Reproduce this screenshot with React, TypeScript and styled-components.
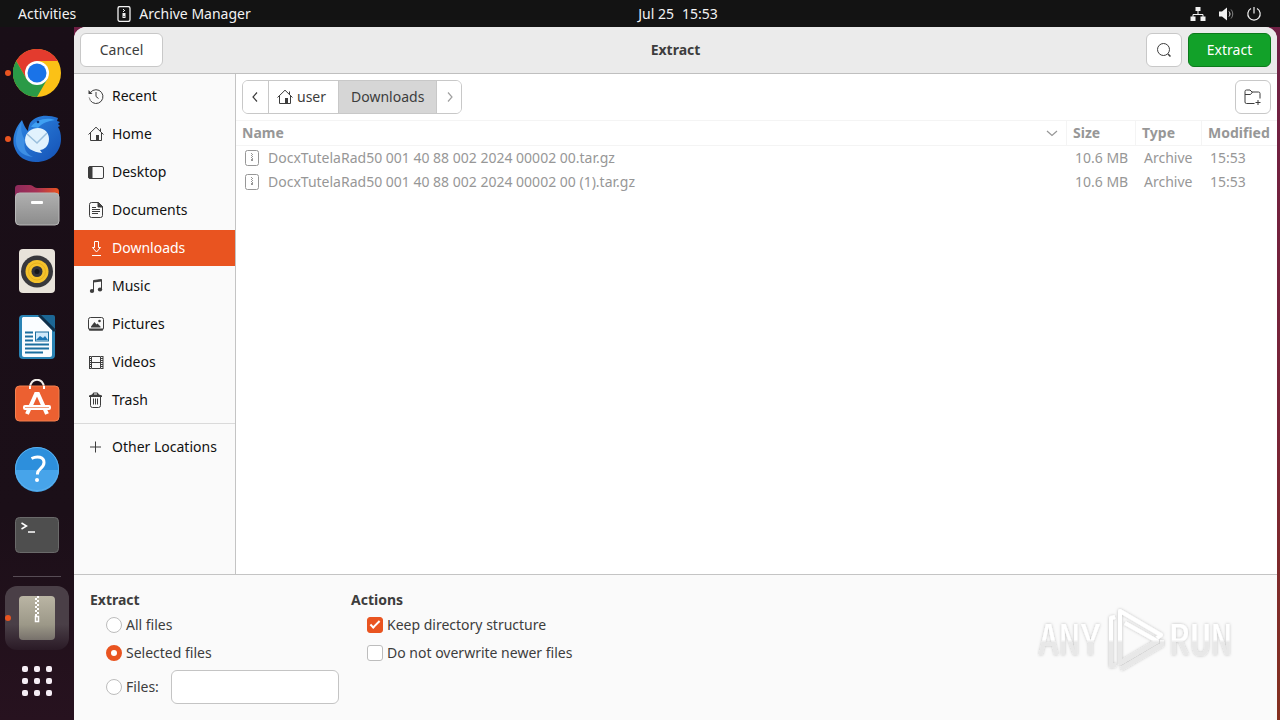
import React, { useState } from "react";
import styled, { createGlobalStyle, css } from "styled-components";

const GlobalStyle = createGlobalStyle`
  *, *::before, *::after { box-sizing: border-box; }
  body {
    margin: 0;
    background: #1a0f18;
    font-family: "Noto Sans", "Open Sans", sans-serif;
    font-size: 14px;
    line-height: 20px;
    color: #3d3d3d;
  }
  button, input { font: inherit; color: inherit; }
`;

const Desktop = styled.div`
  display: flex;
  flex-direction: column;
  min-height: 100vh;
  background: linear-gradient(#6e1f45, #7a2436 60%, #84301f);
`;

const TopBar = styled.header`
  display: flex;
  align-items: center;
  height: 27px;
  padding: 0 18px;
  background: #131313;
  color: #f2f2f2;
`;

const BarSide = styled.div<{ $end?: boolean }>`
  display: flex;
  flex: 1;
  align-items: center;
  gap: ${(p) => (p.$end ? 12 : 40)}px;
  justify-content: ${(p) => (p.$end ? "flex-end" : "flex-start")};
`;

const BarButton = styled.button`
  display: flex;
  align-items: center;
  gap: 7px;
  padding: 0;
  border: 0;
  background: none;
`;

const Clock = styled.time`
  display: flex;
  gap: 8px;
  padding-left: 76px;
`;

const Workspace = styled.div`
  display: flex;
  flex: 1;
  padding-right: 3px;
`;

const Dock = styled.nav`
  display: flex;
  flex-direction: column;
  align-items: center;
  width: 74px;
  padding-top: 13px;
  background: linear-gradient(#190e17, #1b0f18 70%, #27121f);
`;

const DockItem = styled.button<{ $running?: boolean; $active?: boolean; $height?: number }>`
  position: relative;
  display: flex;
  align-items: center;
  justify-content: center;
  width: 64px;
  height: ${(p) => p.$height ?? 66}px;
  padding: 0;
  border: 0;
  border-radius: 12px;
  background: ${(p) => (p.$active ? "linear-gradient(#4a3f47 60%, #2a1a26)" : "none")};
  ${(p) =>
    p.$running &&
    css`
      &::before {
        content: "";
        position: absolute;
        left: 0;
        width: 6px;
        height: 6px;
        border-radius: 50%;
        background: #e95420;
      }
    `}
`;

const DockRule = styled.hr`
  width: 48px;
  height: 1px;
  margin: 8px 0 9px;
  border: 0;
  background: #574c55;
`;

const Dialog = styled.main`
  display: flex;
  flex: 1;
  flex-direction: column;
  min-width: 0;
  border-radius: 12px 12px 0 0;
  background: #fafafa;
  overflow: hidden;
`;

const HeaderBar = styled.div`
  display: grid;
  grid-template-columns: 1fr auto 1fr;
  align-items: center;
  height: 47px;
  padding: 0 6px;
  border-bottom: 1px solid #bfbfbf;
  background: #ebebeb;
`;

const Title = styled.h1`
  margin: 0;
  font-size: 14px;
  line-height: 20px;
`;

const HeaderEnd = styled.div`
  display: flex;
  justify-content: flex-end;
  gap: 6px;
`;

const Button = styled.button<{ $kind?: "suggested" | "icon" }>`
  display: flex;
  align-items: center;
  justify-content: center;
  justify-self: start;
  width: ${(p) => (p.$kind === "icon" ? 36 : 83)}px;
  height: 34px;
  padding: 0;
  border: 1px solid #c8c8c8;
  border-radius: 6px;
  background: #fff;
  ${(p) =>
    p.$kind === "suggested" &&
    css`
      border-color: #0b7a1b;
      background: #12a129;
      color: #fff;
    `}
`;

const Body = styled.div`
  display: flex;
  flex: 1;
  min-height: 500px;
`;

const Sidebar = styled.nav`
  display: flex;
  flex-direction: column;
  gap: 2px;
  width: 162px;
  padding-top: 4px;
  border-right: 1px solid #c4c4c4;
  background: #fafafa;
`;

const Place = styled.a<{ $selected?: boolean }>`
  display: flex;
  align-items: center;
  gap: 8px;
  height: 36px;
  padding-left: 14px;
  color: ${(p) => (p.$selected ? "#fff" : "#111")};
  background: ${(p) => (p.$selected ? "#e95420" : "transparent")};
  text-decoration: none;
  white-space: nowrap;
  svg { color: ${(p) => (p.$selected ? "#fff" : "#3d3d3d")}; }
`;

const PlaceRule = styled.hr`
  width: 100%;
  height: 1px;
  margin: 3px 0;
  border: 0;
  background: #dadada;
`;

const Browser = styled.section`
  flex: 1;
  min-width: 0;
  background: #fff;
`;

const PathRow = styled.div`
  display: flex;
  justify-content: space-between;
  padding: 6px;
`;

const PathBar = styled.div`
  display: flex;
  height: 34px;
  border: 1px solid #c8c8c8;
  border-radius: 6px;
  overflow: hidden;
`;

const Crumb = styled.button<{ $current?: boolean; $faded?: boolean; $arrow?: boolean }>`
  display: flex;
  align-items: center;
  justify-content: center;
  gap: 4px;
  min-width: 25px;
  padding: 0 ${(p) => (p.$arrow ? 0 : p.$current ? 12 : 8)}px;
  border: 0;
  border-left: 1px solid #c8c8c8;
  background: ${(p) => (p.$current ? "#d6d6d6" : "#fff")};
  color: ${(p) => (p.$faded ? "#a0a0a0" : "#3d3d3d")};
  &:first-child { border-left: 0; }
  &:nth-child(2) { padding-right: 12px; }
`;

const FileTable = styled.table`
  width: 100%;
  border-collapse: separate;
  border-spacing: 0;
  table-layout: fixed;
  color: #979797;
`;

const HeadCell = styled.th<{ $width?: number }>`
  width: ${(p) => (p.$width ? `${p.$width}px` : "auto")};
  height: 26px;
  padding: 0 0 0 6px;
  border: solid #f4f4f4;
  border-width: 1px 0 1px ${(p) => (p.$width ? 1 : 0)}px;
  text-align: left;
  white-space: nowrap;
`;

const Cell = styled.td<{ $first?: boolean }>`
  height: 24px;
  padding: 0 0 0 ${(p) => (p.$first ? 8 : 9)}px;
  white-space: nowrap;
`;

const Spread = styled.div`
  display: flex;
  align-items: center;
  justify-content: space-between;
  padding-right: 6px;
`;

const FileName = styled.div`
  display: flex;
  align-items: center;
  gap: 8px;
`;

const Options = styled.form`
  display: flex;
  align-items: flex-start;
  min-height: 146px;
  padding: 15px 40px 0 16px;
  border-top: 1px solid #c4c4c4;
  background: #fafafa;
`;

const Group = styled.fieldset`
  width: 249px;
  min-width: 0;
  margin: 0 12px 0 0;
  padding: 0;
  border: 0;
`;

const Legend = styled.legend`
  padding: 0 0 1px;
  font-weight: 700;
`;

const OptionRow = styled.div<{ $tall?: boolean }>`
  display: flex;
  align-items: center;
  height: ${(p) => (p.$tall ? 34 : 28)}px;
  margin-top: ${(p) => (p.$tall ? 3 : 0)}px;
  padding-left: 16px;
`;

const OptionLabel = styled.label`
  display: flex;
  align-items: center;
  gap: 4px;
  white-space: nowrap;
`;

const Radio = styled.input.attrs({ type: "radio" })`
  appearance: none;
  width: 16px;
  height: 16px;
  margin: 0;
  border: 1px solid #bdbdbd;
  border-radius: 50%;
  background: #fff;
  &:checked {
    border: 5px solid #e95420;
  }
`;

const CheckBox = styled.input.attrs({ type: "checkbox" })`
  appearance: none;
  display: grid;
  place-items: center;
  width: 16px;
  height: 16px;
  margin: 0;
  border: 1px solid #bdbdbd;
  border-radius: 3px;
  background: #fff;
  &:checked {
    border-color: #e95420;
    background: #e95420;
  }
  &:checked::before {
    content: "";
    width: 10px;
    height: 5px;
    margin-bottom: 3px;
    border: solid #fff;
    border-width: 0 0 2px 2px;
    transform: rotate(-45deg);
  }
`;

const TextBox = styled.input`
  width: 168px;
  height: 34px;
  margin-left: auto;
  padding: 0 8px;
  border: 1px solid #c4c4c4;
  border-radius: 6px;
  background: #fff;
`;

const Watermark = styled.svg`
  margin: 15px 0 0 auto;
`;

/* ---------- symbolic icons ---------- */

type IconProps = { size?: number; children: React.ReactNode };

const Icon = ({ size = 16, children }: IconProps) => (
  <svg width={size} height={size} viewBox="0 0 16 16" fill="none" stroke="currentColor" aria-hidden="true">
    {children}
  </svg>
);

const HomeIcon = () => (
  <Icon>
    <path d="M.5 8.5 8 1.2l7.500 7.300M2.500 7v7.500h11V7M12.500 5.500v-3" />
    <path d="M8 9h3v5.500H8z" fill="currentColor" stroke="none" />
  </Icon>
);

const ArchiveIcon = ({ bar }: { bar?: boolean }) => (
  <Icon>
    {bar ? (
      <>
        <rect x="2" y=".5" width="12" height="15" rx="2" strokeWidth="1.300" />
        <path d="M7 3h1v1H7zM8 4h1v1H8zM7 5h1v1H7zM6.500 7h3v5h-3z" fill="currentColor" stroke="none" />
        <path d="M7.500 10.500h1" stroke="#131313" />
      </>
    ) : (
      <>
        <rect x="1.500" y=".5" width="13" height="15" rx="2" />
        <path
          d="M7 3h1v1H7zM8 4h1v1H8zM7 5h1v1H7zM8 6h1v1H8zM7 7h1v1H7zM8 8h1v1H8zM7 9h2v2H7z"
          fill="currentColor"
          stroke="none"
        />
      </>
    )}
  </Icon>
);

const places = [
  {
    name: "Recent",
    icon: (
      <Icon>
        <path d="M2.500 4.500A6.900 6.900 0 1 1 1.200 9.500" />
        <path d="M1.200 9.500A7 7 0 0 0 3 13.200" stroke="#fafafa" strokeDasharray="1 1" />
        <path d="M8 4v4.500l2.500 2" />
        <path d="M.5 2v4h4z" fill="currentColor" stroke="none" />
      </Icon>
    ),
  },
  { name: "Home", icon: <HomeIcon /> },
  {
    name: "Desktop",
    icon: (
      <Icon>
        <rect x=".5" y="2.500" width="15" height="12" rx="1.500" />
        <path d="M1 3h3v11H1z" fill="currentColor" />
      </Icon>
    ),
  },
  {
    name: "Documents",
    icon: (
      <Icon>
        <path d="M3.500.5h7l4 4v9a2 2 0 0 1-2 2h-9a2 2 0 0 1-2-2v-11a2 2 0 0 1 2-2zM4 5.500h4M4 7.500h8M4 9.500h8M4 11.500h6" />
        <path d="M10 .5 14.500 5H10z" fill="currentColor" />
      </Icon>
    ),
  },
  {
    name: "Downloads",
    icon: (
      <Icon>
        <path d="M6.500 1.500h4v6h2l-4 4.500-4-4.500h2zM4 15.500h9" />
      </Icon>
    ),
  },
  {
    name: "Music",
    icon: (
      <Icon>
        <path d="M5.500 13V2.500l8-1V11" />
        <path d="M5.500 3.500l8-1" strokeWidth="2" />
        <ellipse cx="4" cy="13" rx="2.200" ry="1.900" fill="currentColor" stroke="none" />
        <ellipse cx="12" cy="11.500" rx="2.200" ry="1.900" fill="currentColor" stroke="none" />
      </Icon>
    ),
  },
  {
    name: "Pictures",
    icon: (
      <Icon>
        <rect x=".5" y="1.500" width="15" height="12.500" rx="2" />
        <path d="M1 13.500h14" strokeWidth="2" />
        <path d="M3 11.500v-1L6.500 6l2 2.500L9.500 7.500l3 3v1z" fill="currentColor" stroke="none" />
        <circle cx="11.500" cy="5" r="1.300" fill="currentColor" stroke="none" />
      </Icon>
    ),
  },
  {
    name: "Videos",
    icon: (
      <Icon>
        <path d="M3.500 2.500h9v12h-9zM3.500 8.500h9M1 2.500h2M13 2.500h2M1 14.500h2M13 14.500h2" />
        <path d="M2 2v13M14 2v13" strokeWidth="2" strokeDasharray="1 1" />
        <path d="M1.500 2v13M15 2v13" />
      </Icon>
    ),
  },
  {
    name: "Trash",
    icon: (
      <Icon>
        <path d="M2.500 5v8.500a2 2 0 0 0 2 2h6a2 2 0 0 0 2-2V5M5.500 6.500v6M7.500 6.500v6M9.500 6.500v6" />
        <path d="M1 5V3.500L4 2.500 5.500.5h4L11 2.500l3 1V5zM6 1.500v1h3v-1z" fill="currentColor" fillRule="evenodd" stroke="none" />
      </Icon>
    ),
  },
];

/* ---------- dock icons ---------- */

const Art = ({ children }: { children: React.ReactNode }) => (
  <svg width="48" height="48" viewBox="0 0 48 48" fill="none" aria-hidden="true">
    {children}
  </svg>
);

const ChromeArt = () => (
  <Art>
    <circle cx="24" cy="24" r="24" fill="#fbc116" />
    <path d="M24 12h20.800A24 24 0 0 0 3.200 12L13.600 30z" fill="#e33b2e" />
    <path d="M13.600 30 3.200 12A24 24 0 0 0 24 48l10.400-18z" fill="#2a9a47" />
    <circle cx="24" cy="24" r="12" fill="#fff" />
    <circle cx="24" cy="24" r="9.500" fill="#1a73e8" />
  </Art>
);

const ThunderbirdArt = () => (
  <Art>
    <defs>
      <linearGradient id="bird" x1="0" y1="0" x2="1" y2="1">
        <stop offset="0" stopColor="#2f8ae6" />
        <stop offset="1" stopColor="#1450b4" />
      </linearGradient>
    </defs>
    <path d="M9 5C2 13-1 23 1 31c3 11 12 16 22 16 15 0 25-10 25-23 0-5-1-9-3-12l2-1-2-2 2-2-3-1 1-3C34-1 23 0 17 8c-1 2-2 5-2 8-3-3-4-6-6-11z" fill="url(#bird)" />
    <path d="M9 6c-2 9 0 14 3 19-2 8 1 14 8 17C8 41 2 33 3 23 4 16 6 10 9 6z" fill="#3d8fe4" />
    <path d="M18 12c5-8 16-10 24-7-7 1-13 3-17 8-3-1-5-1-7-1z" fill="#3fa0f2" />
    <path d="M12 25c0-8 7-12 13-12 7 0 11 5 11 11 0 7-5 11-9 11l2 3c-9-1-17-5-17-13z" fill="#e1f2fd" />
    <path d="m14 19 10 9 10-10" stroke="#9abfdc" strokeWidth="1.500" />
    <circle cx="25" cy="7" r="1.300" fill="#0c2f70" />
  </Art>
);

const FilesArt = () => (
  <Art>
    <defs>
      <linearGradient id="tab">
        <stop stopColor="#8c2a5b" />
        <stop offset=".5" stopColor="#a83255" />
        <stop offset="1" stopColor="#e95420" />
      </linearGradient>
      <linearGradient id="front" x2="0" y2="1">
        <stop stopColor="#b0b0b0" />
        <stop offset="1" stopColor="#8c8c8c" />
      </linearGradient>
    </defs>
    <path d="M2 8c0-3 1-4 4-4h11c3 0 4 3 7 3h18c3 0 4 1 4 4v14H2z" fill="url(#tab)" />
    <rect x="2.500" y="12" width="43.500" height="32" rx="4" fill="url(#front)" stroke="#b8b8b8" />
    <rect x="18" y="20" width="12" height="3" rx="1" fill="#fff" />
  </Art>
);

const MusicArt = () => (
  <Art>
    <rect x="6" y="2" width="36" height="44" rx="4" fill="#e8e3da" />
    <circle cx="24" cy="24.500" r="16" fill="#38383c" />
    <circle cx="24" cy="24.500" r="11.500" fill="#f5c22b" />
    <circle cx="24" cy="24.500" r="8.500" stroke="#e6b020" />
    <circle cx="24" cy="24.500" r="5.500" fill="#33333a" />
    <circle cx="24" cy="24.500" r="2.500" fill="#17171b" />
  </Art>
);

const WriterArt = () => (
  <Art>
    <path d="M10 2h18l14 14v26a4 4 0 0 1-4 4H10a4 4 0 0 1-4-4V6a4 4 0 0 1 4-4z" fill="#2a84b5" />
    <path d="M10 4h17l12 13v25a2 2 0 0 1-2 2H11a2 2 0 0 1-2-2V5z" fill="#fafdff" />
    <path d="M27 2h13a2 2 0 0 1 2 2v12z" fill="#1c6795" />
    <path d="m26 2 16 16" stroke="#0f2f49" strokeWidth="3" />
    <path d="M12 19.500h8M12 23.500h8M12 27.500h8M12 31.500h24M12 35.500h24M12 39.500h18" stroke="#1b6f9f" strokeWidth="2" />
    <rect x="22.500" y="19" width="13" height="9" fill="#cfe9fb" stroke="#1b6f9f" />
    <path d="m23 27 4-4 3 2 2-2 3 4z" fill="#1b76b5" />
  </Art>
);

const SoftwareArt = () => (
  <Art>
    <path d="M17 9c0-11 14-11 14 0" stroke="#f3eee9" strokeWidth="2" />
    <rect x="2.500" y="7" width="43.500" height="35" rx="4" fill="#ec6031" stroke="#f3804f" />
    <path d="M17 7v3M31 7v3" stroke="#fff" strokeWidth="2" />
    <path d="m14 35 9-20h2l9 20" stroke="#fff" strokeWidth="4" />
    <rect x="10" y="26" width="28" height="5" rx="2" fill="#fff" />
    <path d="M12 28.500h24" stroke="#f0a080" />
  </Art>
);

const HelpArt = () => (
  <Art>
    <circle cx="24" cy="24" r="22" fill="#2d8fdc" />
    <path d="M2 25a22 22 0 0 0 44 0z" fill="#47a4ea" />
    <circle cx="24" cy="24" r="21.500" stroke="#5ab0ee" />
    <path d="M18.500 13.500c6-3 12.500-1.500 12.500 4 0 6-6.500 6-6.500 11v1" stroke="#fff" strokeWidth="3" />
    <circle cx="24" cy="35" r="2" fill="#fff" />
  </Art>
);

const TerminalArt = () => (
  <Art>
    <rect x="2.500" y="6.500" width="43" height="35" rx="4" fill="#4e4e4e" stroke="#6a6a6a" />
    <path d="m8.500 12 5 3-5 3M15 21h7" stroke="#fff" strokeWidth="1.500" />
  </Art>
);

const ArchiveArt = () => (
  <Art>
    <defs>
      <linearGradient id="box" x2="0" y2="1">
        <stop stopColor="#bab5a4" />
        <stop offset=".65" stopColor="#9c9888" />
        <stop offset="1" stopColor="#77716b" />
      </linearGradient>
    </defs>
    <rect x="6" y="2" width="36" height="44" rx="4" fill="url(#box)" />
    <path d="M23 4v18" stroke="#fff" strokeWidth="2" strokeDasharray="2 2" />
    <path d="M25 2v20" stroke="#fff" strokeWidth="2" strokeDasharray="2 2" />
    <path d="M22.500 22.500h3v5h-3z" stroke="#fff" strokeWidth="1.500" />
  </Art>
);

const GridArt = () => (
  <Art>
    {[9, 21, 33].map((y) =>
      [9, 21, 33].map((x) => <rect key={`${x}-${y}`} x={x} y={y} width="6" height="6" rx="2" fill="#f6eef5" />)
    )}
  </Art>
);

const dockApps = [
  { name: "Google Chrome", art: <ChromeArt />, running: true },
  { name: "Thunderbird", art: <ThunderbirdArt />, running: true },
  { name: "Files", art: <FilesArt /> },
  { name: "Rhythmbox", art: <MusicArt /> },
  { name: "LibreOffice Writer", art: <WriterArt /> },
  { name: "Ubuntu Software", art: <SoftwareArt /> },
  { name: "Help", art: <HelpArt /> },
  { name: "Terminal", art: <TerminalArt /> },
];

const files = [
  "DocxTutelaRad50 001 40 88 002 2024 00002 00.tar.gz",
  "DocxTutelaRad50 001 40 88 002 2024 00002 00 (1).tar.gz",
];

const AnyRunMark = () => (
  <Watermark width="200" height="72" viewBox="0 0 200 72" aria-label="ANY RUN">
    <defs>
      <linearGradient id="mark" gradientUnits="userSpaceOnUse" x1="0" y1="0" x2="0" y2="72">
        <stop offset=".48" stopColor="#fff" />
        <stop offset=".52" stopColor="#e8e8e8" />
      </linearGradient>
      <filter id="soft" x="-10%" y="-20%" width="120%" height="140%">
        <feDropShadow dx="0" dy="0" stdDeviation="1.500" floodColor="#000" floodOpacity=".25" />
      </filter>
    </defs>
    <g filter="url(#soft)">
      <g fill="url(#mark)" fontFamily='"Noto Sans Mono CJK SC", "Noto Sans Mono CJK JP", monospace' fontSize="42">
        <text x="1" y="50">ANY</text>
        <text x="132" y="50">RUN</text>
      </g>
      <g stroke="url(#mark)" strokeWidth="4" fill="none" strokeLinejoin="round">
        <path d="M83 45V6l41 24-4 3M88 18l32 18-37 22V45" />
        <path d="M78 12l-4 1v48l5-1M84 64l41-24v-5" />
      </g>
    </g>
  </Watermark>
);

export default function App() {
  const [scope, setScope] = useState("selected");
  const [keep, setKeep] = useState(true);
  const [newer, setNewer] = useState(false);

  return (
    <Desktop>
      <GlobalStyle />
      <TopBar>
        <BarSide>
          <BarButton>Activities</BarButton>
          <BarButton>
            <ArchiveIcon bar />
            Archive Manager
          </BarButton>
        </BarSide>
        <Clock>
          <span>Jul 25</span>
          <span>15:53</span>
        </Clock>
        <BarSide $end>
          <Icon>
            <path d="M5.500 1h5v4h-5zM.5 10.500h5V15h-5zM10.500 10.500h5V15h-5z" fill="currentColor" stroke="none" />
            <path d="M8 5v3.500M3 11V8.500h10V11" />
          </Icon>
          <Icon>
            <path d="M1 5.500h3L9 1.500v13l-5-4H1z" fill="currentColor" stroke="none" />
            <path d="M11 5.500c1.300 1.500 1.300 3.500 0 5" />
            <path d="M13 3.500c2.300 2.700 2.300 6.300 0 9" opacity=".5" />
          </Icon>
          <Icon>
            <path d="M5 2.500a6.200 6.200 0 1 0 6 0M8 1v6.500" strokeWidth="1.200" />
          </Icon>
        </BarSide>
      </TopBar>

      <Workspace>
        <Dock aria-label="Dock">
          {dockApps.map((app) => (
            <DockItem key={app.name} aria-label={app.name} $running={app.running}>
              {app.art}
            </DockItem>
          ))}
          <DockRule />
          <DockItem aria-label="Archive Manager" $running $active $height={64}>
            <ArchiveArt />
          </DockItem>
          <DockItem aria-label="Show Applications" $height={62}>
            <GridArt />
          </DockItem>
        </Dock>

        <Dialog>
          <HeaderBar>
            <Button>Cancel</Button>
            <Title>Extract</Title>
            <HeaderEnd>
              <Button $kind="icon" aria-label="Search">
                <Icon>
                  <circle cx="7.500" cy="7.500" r="6" />
                  <path d="m12 12 2.500 2.500" strokeWidth="1.500" />
                </Icon>
              </Button>
              <Button $kind="suggested">Extract</Button>
            </HeaderEnd>
          </HeaderBar>

          <Body>
            <Sidebar aria-label="Places">
              {places.map((place) => (
                <Place key={place.name} href="#" $selected={place.name === "Downloads"}>
                  {place.icon}
                  {place.name}
                </Place>
              ))}
              <PlaceRule />
              <Place href="#">
                <Icon>
                  <path d="M7.500 2.500v11M2 8h11" />
                </Icon>
                Other Locations
              </Place>
            </Sidebar>

            <Browser>
              <PathRow>
                <PathBar>
                  <Crumb $arrow aria-label="Back">
                    <Icon>
                      <path d="M9 3.500 5 8l4 4.500" strokeWidth="1.200" />
                    </Icon>
                  </Crumb>
                  <Crumb>
                    <HomeIcon />
                    user
                  </Crumb>
                  <Crumb $current>Downloads</Crumb>
                  <Crumb $arrow $faded aria-label="Forward">
                    <Icon>
                      <path d="m7 3.500 4 4.500-4 4.500" strokeWidth="1.200" />
                    </Icon>
                  </Crumb>
                </PathBar>
                <Button $kind="icon" aria-label="Create Folder">
                  <svg width="18" height="16" viewBox="0 0 18 16" fill="none" stroke="#3d3d3d" aria-hidden="true">
                    <path d="M10.500 14.500h-8a1.500 1.500 0 0 1-1.500-1.500V2.500A1.500 1.500 0 0 1 2.500 1h3.500l2 2h6.500A1.500 1.500 0 0 1 16 4.500v5M1 5.500h5.500L8.500 3M14 11v5M11.500 13.500h5" />
                  </svg>
                </Button>
              </PathRow>

              <FileTable>
                <thead>
                  <tr>
                    <HeadCell>
                      <Spread>
                        Name
                        <Icon>
                          <path d="m3 6 5 4.500L13 6" strokeWidth="1.200" />
                        </Icon>
                      </Spread>
                    </HeadCell>
                    <HeadCell $width={69}>Size</HeadCell>
                    <HeadCell $width={66}>Type</HeadCell>
                    <HeadCell $width={76}>Modified</HeadCell>
                  </tr>
                </thead>
                <tbody>
                  {files.map((name) => (
                    <tr key={name}>
                      <Cell $first>
                        <FileName>
                          <ArchiveIcon />
                          {name}
                        </FileName>
                      </Cell>
                      <Cell>10.6 MB</Cell>
                      <Cell>Archive</Cell>
                      <Cell>15:53</Cell>
                    </tr>
                  ))}
                </tbody>
              </FileTable>
            </Browser>
          </Body>

          <Options>
            <Group>
              <Legend>Extract</Legend>
              <OptionRow>
                <OptionLabel>
                  <Radio name="scope" checked={scope === "all"} onChange={() => setScope("all")} />
                  All files
                </OptionLabel>
              </OptionRow>
              <OptionRow>
                <OptionLabel>
                  <Radio name="scope" checked={scope === "selected"} onChange={() => setScope("selected")} />
                  Selected files
                </OptionLabel>
              </OptionRow>
              <OptionRow $tall>
                <OptionLabel>
                  <Radio name="scope" checked={scope === "pattern"} onChange={() => setScope("pattern")} />
                  Files:
                </OptionLabel>
                <TextBox type="text" aria-label="Files pattern" />
              </OptionRow>
            </Group>
            <Group>
              <Legend>Actions</Legend>
              <OptionRow>
                <OptionLabel>
                  <CheckBox checked={keep} onChange={() => setKeep(!keep)} />
                  Keep directory structure
                </OptionLabel>
              </OptionRow>
              <OptionRow>
                <OptionLabel>
                  <CheckBox checked={newer} onChange={() => setNewer(!newer)} />
                  Do not overwrite newer files
                </OptionLabel>
              </OptionRow>
            </Group>
            <AnyRunMark />
          </Options>
        </Dialog>
      </Workspace>
    </Desktop>
  );
}
